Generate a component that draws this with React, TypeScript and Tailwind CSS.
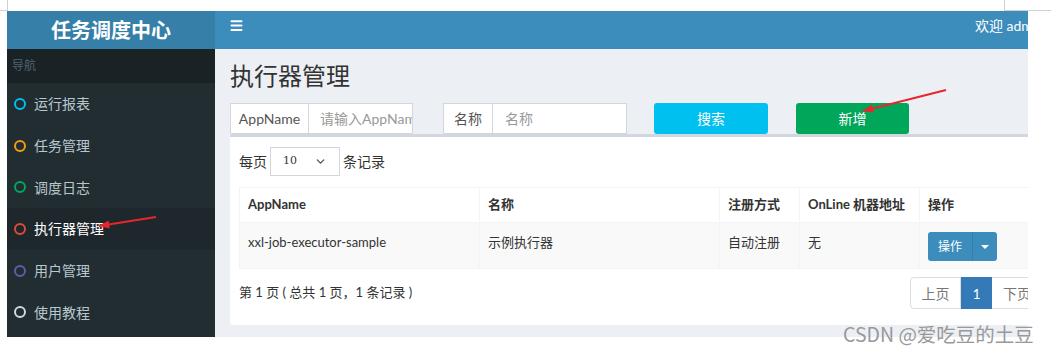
import { Menu, ChevronDown } from 'lucide-react'

const menu = [
  { label: '运行报表', color: 'border-[#00c0ef]' },
  { label: '任务管理', color: 'border-[#f39c12]' },
  { label: '调度日志', color: 'border-[#00a65a]' },
  { label: '执行器管理', color: 'border-[#dd4b39]', active: true },
  { label: '用户管理', color: 'border-[#605ca8]' },
  { label: '使用教程', color: 'border-[#d2d6de]' },
]

function Sidebar() {
  return (
    <div className="w-[208px] shrink-0 flex flex-col bg-[#222d32]">
      <div className="h-[38px] bg-[#367fa9] flex items-center justify-center text-white text-[20px] font-bold">
        任务调度中心
      </div>
      <div className="h-[34px] bg-[#1a2226] pl-[5px] flex items-center text-[12px] text-[#4b646f]">导航</div>
      {menu.map((m) => (
        <div
          key={m.label}
          className={`h-[41.7px] flex items-center pl-[7px] gap-[8px] text-[14px] ${
            m.active ? 'bg-[#1e282c] text-white' : 'text-[#b8c7ce]'
          }`}
        >
          <span className={`w-[12px] h-[12px] rounded-full border-2 ${m.color}`} />
          <span>{m.label}</span>
        </div>
      ))}
    </div>
  )
}

function SearchBar() {
  return (
    <div className="flex items-center h-[31px]">
      <div className="flex h-full w-[183px] bg-white border border-[#d2d6de]">
        <div className="w-[78px] flex items-center justify-center text-[14px] text-[#555] border-r border-[#d2d6de]">
          AppName
        </div>
        <div className="flex-1 flex items-center pl-[11px] text-[14px] text-[#999] overflow-hidden whitespace-nowrap">
          请输入AppName
        </div>
      </div>
      <div className="flex h-full w-[184px] ml-[30px] bg-white border border-[#d2d6de]">
        <div className="w-[49px] flex items-center justify-center text-[14px] text-[#555] border-r border-[#d2d6de]">
          名称
        </div>
        <div className="flex-1 flex items-center pl-[12px] text-[14px] text-[#999]">名称</div>
      </div>
      <button className="ml-[27px] w-[114px] h-full rounded-[3px] bg-[#00c0ef] text-white text-[14px]">搜索</button>
      <button className="ml-[28px] w-[113px] h-full rounded-[3px] bg-[#00a65a] text-white text-[14px]">新增</button>
    </div>
  )
}

function ExecutorTable() {
  return (
    <table className="w-[804px] table-fixed border-collapse text-[13px] text-[#333]">
      <colgroup>
        <col className="w-[240px]" />
        <col className="w-[240px]" />
        <col className="w-[80px]" />
        <col className="w-[120px]" />
        <col className="w-[124px]" />
      </colgroup>
      <thead>
        <tr className="h-[35px] bg-white">
          {['AppName', '名称', '注册方式', 'OnLine 机器地址', '操作'].map((h) => (
            <th key={h} className="text-left font-bold px-[8px] border border-[#f4f4f4] whitespace-nowrap">
              {h}
            </th>
          ))}
        </tr>
      </thead>
      <tbody>
        <tr className="h-[46px] bg-[#f9f9f9] align-top">
          <td className="px-[8px] pt-[10px] border border-[#f4f4f4]">xxl-job-executor-sample</td>
          <td className="px-[8px] pt-[10px] border border-[#f4f4f4]">示例执行器</td>
          <td className="px-[8px] pt-[10px] border border-[#f4f4f4]">自动注册</td>
          <td className="px-[8px] pt-[10px] border border-[#f4f4f4]">无</td>
          <td className="px-[8px] pt-[9px] border border-[#f4f4f4]">
            <div className="flex w-[69px] h-[29px] rounded-[3px] bg-[#3c8dbc] text-white text-[12px]">
              <div className="w-[45px] flex items-center justify-center border-r border-[#367fa9]">操作</div>
              <div className="flex-1 flex items-center justify-center">
                <span className="w-0 h-0 border-l-[4px] border-r-[4px] border-t-[4px] border-l-transparent border-r-transparent border-t-white" />
              </div>
            </div>
          </td>
        </tr>
      </tbody>
    </table>
  )
}

function Arrow({ x1, y1, x2, y2 }: { x1: number; y1: number; x2: number; y2: number }) {
  const a = Math.atan2(y2 - y1, x2 - x1)
  const l = 11
  const w = 0.38
  const p1 = `${x2 - l * Math.cos(a - w)},${y2 - l * Math.sin(a - w)}`
  const p2 = `${x2 - l * Math.cos(a + w)},${y2 - l * Math.sin(a + w)}`
  return (
    <g>
      <line x1={x1} y1={y1} x2={x2} y2={y2} stroke="#e8262b" strokeWidth="2" />
      <polygon points={`${x2},${y2} ${p1} ${p2}`} fill="#e8262b" />
    </g>
  )
}

export default function App() {
  return (
    <div className="relative w-[1051px] h-[354px] bg-white font-['Lato','Noto_Sans_CJK_SC',sans-serif] overflow-hidden">
      <div className="pt-[11px] pl-[7px]">
        <div className="w-[1021px] h-[326px] overflow-hidden flex">
          <Sidebar />
          <div className="w-[850px] shrink-0 flex flex-col bg-[#ecf0f5]">
            <div className="h-[38px] bg-[#3c8dbc] flex items-center pl-[14px] text-white">
              <Menu className="w-[15px] h-[15px] mb-[10px]" strokeWidth={3.2} />
              <span className="ml-auto mr-[21px] mb-[10px] text-[14px]">欢迎 admin</span>
            </div>
            <div className="pl-[15px] pt-[14px]">
              <h1 className="text-[24px] leading-[26px] text-[#333]">执行器管理</h1>
              <div className="mt-[14px]">
                <SearchBar />
              </div>
              <div className="w-[822px] bg-white border-t-[3px] border-[#d2d6de] rounded-[3px] px-[9px] pt-[10px] h-[191px]">
                <div className="flex items-center gap-[3px] text-[14px] text-[#333]">
                  <span>每页</span>
                  <div className="w-[70px] h-[29px] border border-[#d2d6de] flex items-center justify-between px-[12px] font-['DejaVu_Serif',serif] text-[11px] text-[#333]">
                    <span>10</span>
                    <ChevronDown className="w-[13px] h-[13px] text-[#555]" strokeWidth={2.5} />
                  </div>
                  <span>条记录</span>
                </div>
                <div className="mt-[11px]">
                  <ExecutorTable />
                </div>
                <div className="mt-[8px] flex items-center justify-between">
                  <span className="text-[13px] text-[#333]">第 1 页 ( 总共 1 页，1 条记录 )</span>
                  <div className="flex h-[32px] text-[14px]">
                    <div className="w-[51px] flex items-center justify-center border border-[#ddd] rounded-l-[4px] text-[#777]">上页</div>
                    <div className="w-[31px] flex items-center justify-center bg-[#337ab7] text-white border border-[#337ab7]">1</div>
                    <div className="w-[51px] flex items-center justify-center border border-[#ddd] border-l-0 rounded-r-[4px] text-[#777]">下页</div>
                  </div>
                </div>
              </div>
            </div>
          </div>
        </div>
      </div>

      <div className="absolute left-[7px] top-0 w-px h-[11px] bg-[#d0d0d0]" />
      <div className="absolute left-0 top-[10px] w-[7px] h-px bg-[#d0d0d0]" />
      <div className="absolute left-[1004px] top-0 w-px h-[10px] bg-[#d0d0d0]" />
      <div className="absolute left-[1004px] top-[10px] w-[47px] h-px bg-[#d0d0d0]" />

      <svg className="absolute inset-0 pointer-events-none" width="1051" height="354">
        <Arrow x1={946} y1={90} x2={863} y2={111} />
        <Arrow x1={156} y1={217} x2={99} y2={226} />
      </svg>

      <div className="absolute left-[843px] top-[323px] text-[19.5px] leading-[22px] text-[#999] font-['Noto_Sans_CJK_SC',sans-serif] whitespace-nowrap">
        CSDN @爱吃豆的土豆
      </div>
    </div>
  )
}
